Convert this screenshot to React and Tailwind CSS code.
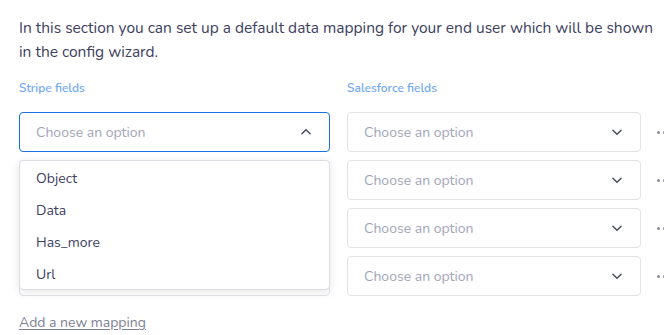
import React from "react"

const font = { fontFamily: "Nunito, Lato, 'Noto Sans', sans-serif" }

function Chevron({ up }) {
	return (
		<svg width="14" height="14" viewBox="0 0 24 24" fill="none" stroke="#4b4f63" strokeWidth="2.6" strokeLinecap="round" strokeLinejoin="round">
			{up ? <path d="M5 15l7-7 7 7" /> : <path d="M5 9l7 7 7-7" />}
		</svg>
	)
}

function Select({ open, className }) {
	return (
		<div
			className={`h-10 flex items-center justify-between pl-4 pr-4 rounded-[4px] border bg-white ${
				open ? "border-[#1a6fe0]" : "border-[#e3e3e8]"
			} ${className}`}
		>
			<span className="text-[14px] text-[#a3a6b8]">Choose an option</span>
			<Chevron up={open} />
		</div>
	)
}

function Dots() {
	return (
		<div className="flex items-center gap-[3px] shrink-0 w-6 h-10">
			<span className="w-[3px] h-[3px] rounded-full bg-[#8a8c99]" />
			<span className="w-[3px] h-[3px] rounded-full bg-[#8a8c99]" />
			<span className="w-[3px] h-[3px] rounded-full bg-[#8a8c99]" />
		</div>
	)
}

export default function App() {
	const options = ["Object", "Data", "Has_more", "Url"]

	return (
		<div className="w-[664px] h-[335px] overflow-hidden bg-white text-[#3d4060]" style={font}>
			<div className="w-[700px] pl-[19px] pt-[16px]">
				<p className="text-[15.5px] leading-[24px] w-[642px]">
					In this section you can set up a default data mapping for your end user which will be shown
					in the config wizard.
				</p>

				<div className="flex gap-[17px] mt-[15px] text-[12px] leading-[18px] font-semibold text-[#72a7f5]">
					<span className="w-[311px]">Stripe fields</span>
					<span>Salesforce fields</span>
				</div>

				<div className="relative mt-[15px] flex flex-col gap-2">
					{[0, 1, 2, 3].map((i) => (
						<div key={i} className="flex items-center">
							<Select open={i === 0} className="w-[311px]" />
							<Select className="w-[294px] ml-[17px]" />
							<div className="ml-[16px]">
								<Dots />
							</div>
						</div>
					))}

					{/* open menu */}
					<div className="absolute left-0 top-[48px] w-[311px] h-[130px] bg-white border border-[#dcdce4] rounded-[4px] shadow-[0_2px_10px_rgba(0,0,0,0.10)] py-[1px]">
						{options.map((o) => (
							<div key={o} className="h-8 flex items-center pl-4 text-[14px] text-[#3d4060]">
								{o}
							</div>
						))}
					</div>
				</div>

				<a className="inline-block mt-[16px] text-[14px] text-[#7d8094] underline underline-offset-2">
					Add a new mapping
				</a>
			</div>
		</div>
	)
}
